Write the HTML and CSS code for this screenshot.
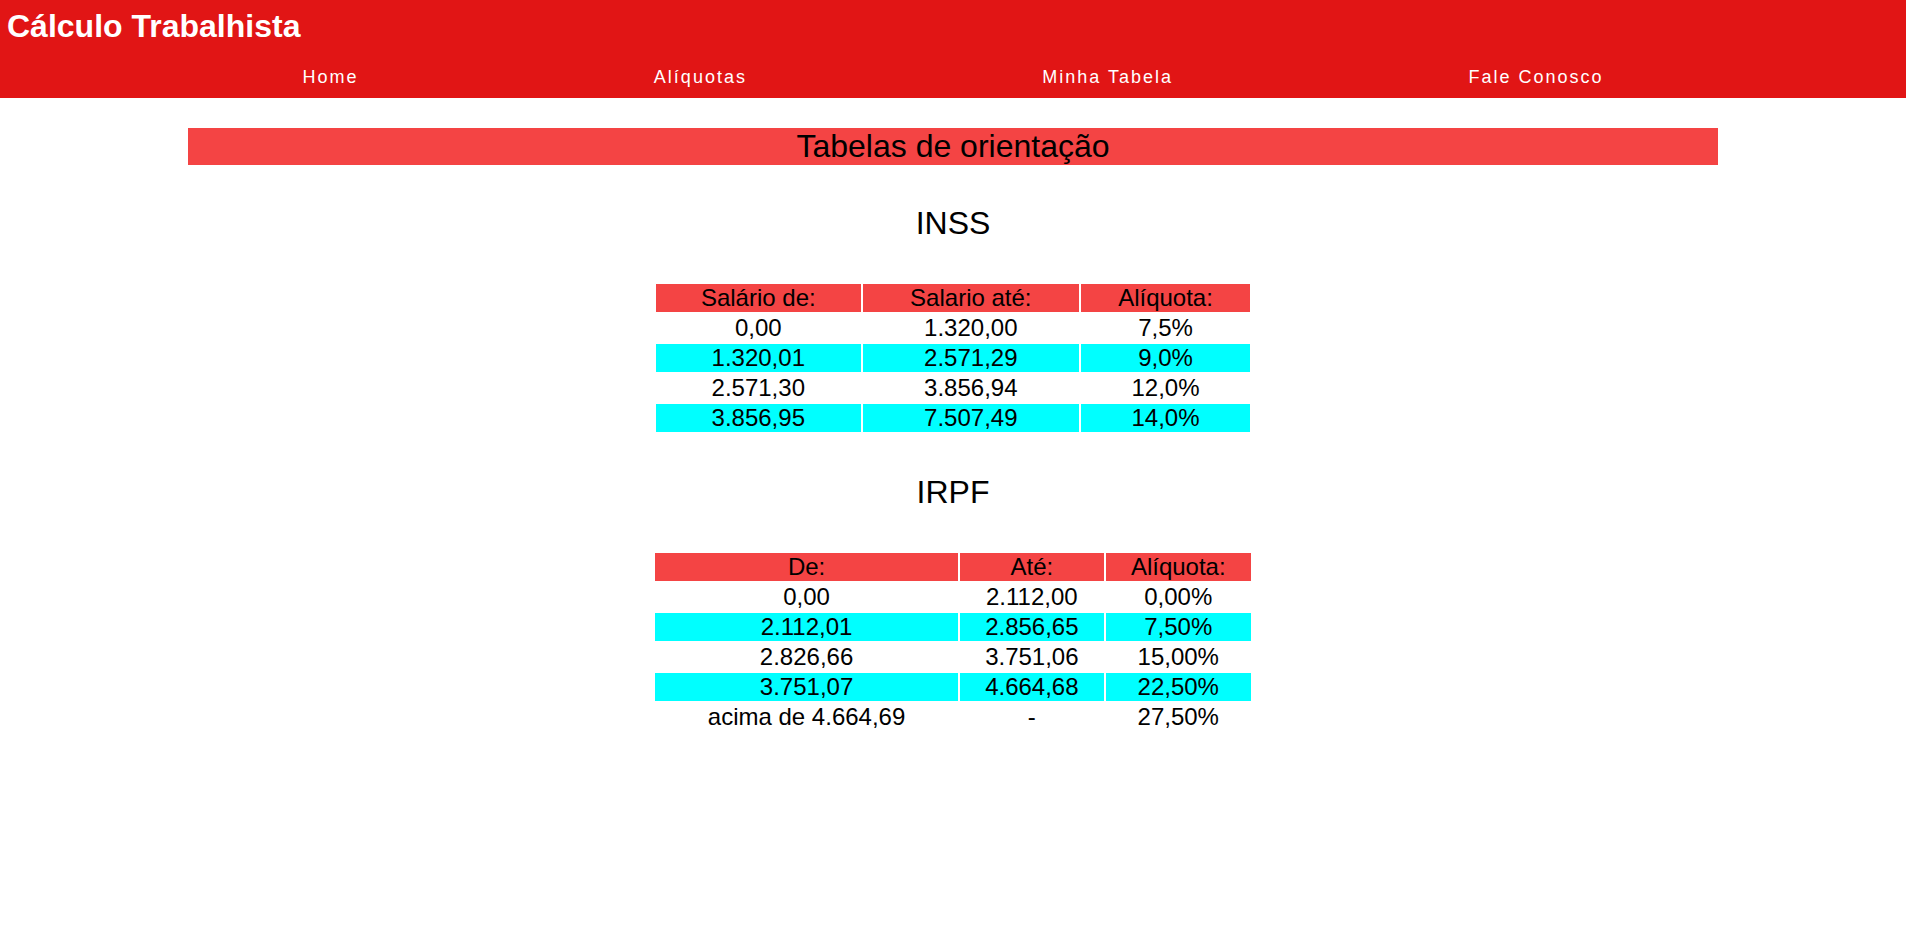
FILE: index.html
```html
<!DOCTYPE html>
<html lang="pt-BR">
<head>
<meta charset="UTF-8">
<meta name="viewport" content="width=device-width, initial-scale=1">
<title>Cálculo Trabalhista</title>
<link rel="stylesheet" href="styles.css">
</head>
<body>
<header class="header">
  <h1 class="logo">Cálculo Trabalhista</h1>
  <nav class="menu">
    <a class="menu-link" href="#home">Home</a>
    <a class="menu-link" href="#aliquotas">Alíquotas</a>
    <a class="menu-link" href="#tabela">Minha Tabela</a>
    <a class="menu-link" href="#contato">Fale Conosco</a>
  </nav>
</header>
<main class="content">
  <h2 class="title banner">Tabelas de orientação</h2>
  <h3 class="title" id="inss">INSS</h3>
  <table class="rates rates-inss" aria-labelledby="inss">
    <thead>
      <tr><th>Salário de:</th><th>Salario até:</th><th>Alíquota:</th></tr>
    </thead>
    <tbody>
      <tr><td>0,00</td><td>1.320,00</td><td>7,5%</td></tr>
      <tr><td>1.320,01</td><td>2.571,29</td><td>9,0%</td></tr>
      <tr><td>2.571,30</td><td>3.856,94</td><td>12,0%</td></tr>
      <tr><td>3.856,95</td><td>7.507,49</td><td>14,0%</td></tr>
    </tbody>
  </table>
  <h3 class="title" id="irpf">IRPF</h3>
  <table class="rates" aria-labelledby="irpf">
    <thead>
      <tr><th>De:</th><th>Até:</th><th>Alíquota:</th></tr>
    </thead>
    <tbody>
      <tr><td>0,00</td><td>2.112,00</td><td>0,00%</td></tr>
      <tr><td>2.112,01</td><td>2.856,65</td><td>7,50%</td></tr>
      <tr><td>2.826,66</td><td>3.751,06</td><td>15,00%</td></tr>
      <tr><td>3.751,07</td><td>4.664,68</td><td>22,50%</td></tr>
      <tr><td>acima de 4.664,69</td><td>-</td><td>27,50%</td></tr>
    </tbody>
  </table>
</main>
</body>
</html>
```

FILE: styles.css
```css
* {
  box-sizing: border-box;
  margin: 0;
  padding: 0;
}

body {
  background: #fff;
  color: #000;
  font-family: "Liberation Sans", Arial, sans-serif;
}

.header {
  background: #e11515;
  color: #fff;
  padding: 8px 7px 10px;
}

.logo {
  font-size: 32px;
  line-height: 37px;
}

.menu {
  display: flex;
  justify-content: space-evenly;
  margin-top: 22px;
}

.menu-link {
  color: #fff;
  font-size: 18px;
  letter-spacing: 2px;
  line-height: 21px;
  text-decoration: none;
}

.content {
  display: flex;
  flex-direction: column;
  align-items: center;
  gap: 40px;
  width: calc(80% + 6px);
  margin: 30px auto;
}

.title {
  font-size: 32px;
  font-weight: 400;
  line-height: 37px;
  text-align: center;
}

.banner {
  align-self: stretch;
  background: #f44444;
}

.rates {
  width: 600px;
  max-width: 100%;
  border-spacing: 2px;
  font-size: 24px;
  line-height: 28px;
  text-align: center;
}

.rates-inss {
  width: 598px;
}

.rates th {
  background: #f44444;
  font-weight: 400;
}

.rates tbody tr:nth-child(even) td {
  background: #0ff;
}
```
